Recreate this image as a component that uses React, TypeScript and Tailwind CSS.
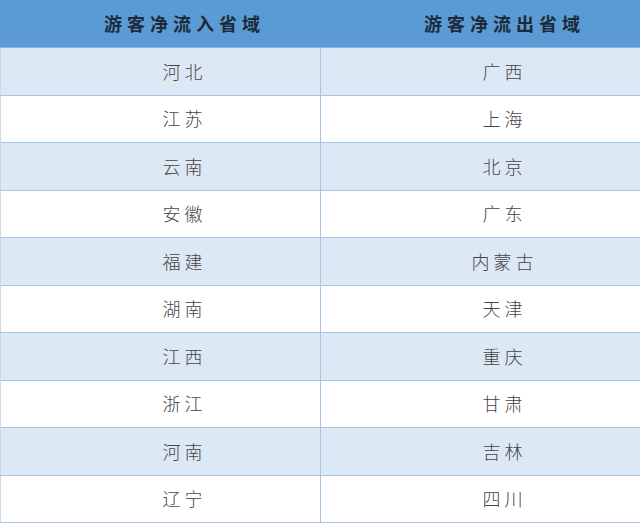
import React from "react";

const rows: [string, string][] = [
  ["河北", "广西"],
  ["江苏", "上海"],
  ["云南", "北京"],
  ["安徽", "广东"],
  ["福建", "内蒙古"],
  ["湖南", "天津"],
  ["江西", "重庆"],
  ["浙江", "甘肃"],
  ["河南", "吉林"],
  ["辽宁", "四川"],
];

export default function App() {
  return (
    <div
      className="w-[640px] h-[524px] bg-white overflow-hidden"
      style={{ fontFamily: '"Noto Sans CJK SC", "Noto Sans", sans-serif' }}
    >
      <div className="flex h-[48px] bg-[#5b9bd5] border-b border-[#8fb4de]">
        <div className="w-[321px] flex items-center justify-center pl-[48px] text-[18px] font-bold tracking-[5px] text-[#1d2a3a]">
          游客净流入省域
        </div>
        <div className="flex-1 flex items-center justify-center pl-[48px] text-[18px] font-bold tracking-[5px] text-[#1d2a3a]">
          游客净流出省域
        </div>
      </div>
      {rows.map(([a, b], i) => (
        <div
          key={i}
          className={`flex h-[47.5px] border-b border-[#a9c4e4] border-l border-l-[#c9d9ee] ${
            i % 2 === 0 ? "bg-[#dde8f5]" : "bg-white"
          }`}
        >
          <div className="w-[320px] flex items-center justify-center pl-[48px] text-[18px] font-light tracking-[4px] text-[#444444] border-r border-[#a9c4e4]">
            {a}
          </div>
          <div className="flex-1 flex items-center justify-center pl-[48px] text-[18px] font-light tracking-[4px] text-[#444444]">
            {b}
          </div>
        </div>
      ))}
    </div>
  );
}
